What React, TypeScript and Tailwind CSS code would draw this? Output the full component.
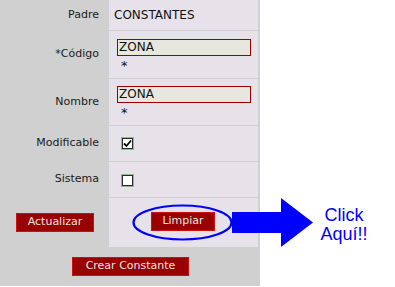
import React from "react";

const font = { fontFamily: '"DejaVu Sans", Verdana, sans-serif' };

function Label({ children }: { children: React.ReactNode }) {
  return (
    <div className="w-[109px] flex items-center justify-end pr-[10px] text-[11px] text-[#1a1a1a]">
      {children}
    </div>
  );
}

function Checkbox({ checked }: { checked?: boolean }) {
  return (
    <div className="w-[13px] h-[13px] border border-[#86c086] bg-white flex">
      <div className="flex-1 border border-[#2a2a2a] bg-white flex items-center justify-center">
        {checked && (
          <svg width="9" height="9" viewBox="0 0 9 9">
            <path d="M1 4.5 L3.5 7 L8 1.5" stroke="#000" strokeWidth="1.8" fill="none" />
          </svg>
        )}
      </div>
    </div>
  );
}

function Btn({ children, w }: { children: React.ReactNode; w: string }) {
  return (
    <div
      className={`${w} h-[19px] bg-[#990000] border border-[#cc1010] text-[#e6e6e6] text-[11px] flex items-center justify-center`}
    >
      {children}
    </div>
  );
}

function InputField({ value }: { value: string }) {
  return (
    <div className="flex flex-col items-start">
      <div className="w-[134px] h-[17px] border border-[#990000] bg-[#e8e7df] text-[12px] leading-[15px] pl-[1px] text-[#111]">
        {value}
      </div>
      <div className="text-[13px] leading-[13px] pl-[4px] pt-[3px] text-[#111]">*</div>
    </div>
  );
}

export default function App() {
  return (
    <div className="relative w-[395px] h-[287px] bg-white overflow-hidden" style={font}>
      <div className="w-[260px] h-[286px] bg-[#d0d0d0] flex flex-col">
        <div className="flex flex-col gap-px w-[258px]">
          <div className="flex h-[30px]">
            <Label>Padre</Label>
            <div className="flex-1 bg-[#e7e1e9] flex items-center pl-[5px] text-[12px] text-[#111]">
              CONSTANTES
            </div>
          </div>
          <div className="flex h-[47px]">
            <Label>*Código</Label>
            <div className="flex-1 bg-[#e7e1e9] flex items-center pl-[8px] pt-[2px]">
              <InputField value="ZONA" />
            </div>
          </div>
          <div className="flex h-[46px]">
            <Label>Nombre</Label>
            <div className="flex-1 bg-[#e7e1e9] flex items-center pl-[8px]">
              <InputField value="ZONA" />
            </div>
          </div>
          <div className="flex h-[35px]">
            <Label>Modificable</Label>
            <div className="flex-1 bg-[#e7e1e9] flex items-center pl-[12px]">
              <Checkbox checked />
            </div>
          </div>
          <div className="flex h-[35px]">
            <Label>Sistema</Label>
            <div className="flex-1 bg-[#e7e1e9] flex items-center pl-[12px] pt-px">
              <Checkbox />
            </div>
          </div>
          <div className="flex h-[49px]">
            <div className="w-[109px] flex items-center justify-center pl-px">
              <Btn w="w-[78px]">Actualizar</Btn>
            </div>
            <div className="flex-1 bg-[#e7e1e9] flex items-center justify-center pr-px pb-[2px]">
              <Btn w="w-[64px]">Limpiar</Btn>
            </div>
          </div>
        </div>
        <div className="flex justify-center pt-[10px] pl-px">
          <Btn w="w-[117px]">Crear Constante</Btn>
        </div>
      </div>

      <svg className="absolute left-0 top-0" width="395" height="287" viewBox="0 0 395 287">
        <ellipse cx="182.5" cy="222.5" rx="49" ry="17" fill="none" stroke="#0000ff" strokeWidth="2.2" />
        <rect x="232" y="212" width="50" height="21" fill="#0000ff" />
        <polygon points="281,198 313,222.5 281,247" fill="#0000ff" />
      </svg>

      <div
        className="absolute left-[300px] top-[206px] w-[88px] text-center text-[18px] leading-[19px] text-[#0000ff]"
        style={{ fontFamily: '"Liberation Sans", Arial, sans-serif' }}
      >
        Click
        <br />
        Aquí!!
      </div>
    </div>
  );
}
